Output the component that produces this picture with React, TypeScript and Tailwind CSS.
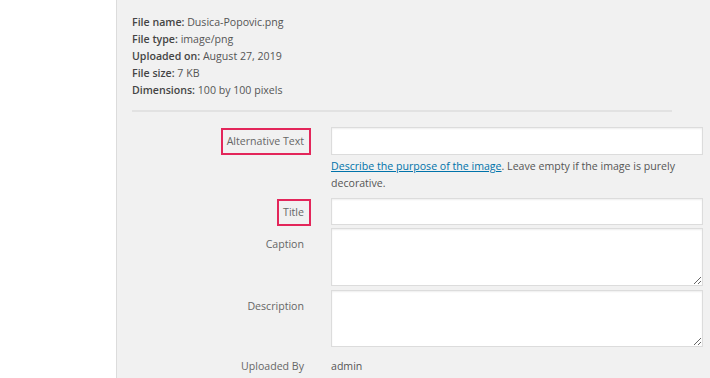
import React from "react";

const font = { fontFamily: '"Open Sans", "Noto Sans", Arial, sans-serif' };

function Annot({ children, box }: { children: React.ReactNode; box: string }) {
  return (
    <span className="relative inline-block">
      {children}
      <span className={`pointer-events-none absolute border-2 border-[#e3265a] ${box}`} />
    </span>
  );
}

function Row({
  label,
  children,
  className = "",
  labelClass = "",
}: {
  label: React.ReactNode;
  children: React.ReactNode;
  className?: string;
  labelClass?: string;
}) {
  return (
    <div className={`flex ${className}`}>
      <div className={`w-[172px] shrink-0 text-right text-[#666] ${labelClass}`}>{label}</div>
      <div className="ml-[27px] w-[372px] shrink-0">{children}</div>
    </div>
  );
}

export default function App() {
  return (
    <div className="flex h-[378px] w-[710px] overflow-hidden text-[10.6px] leading-[17px]" style={font}>
      <div className="w-[116px] shrink-0 bg-white" />
      <div className="w-px shrink-0 bg-[#dcdcdc]" />
      <div className="flex-1 bg-[#f1f1f1] pl-[15px]">
        <div className="pt-[14px] text-[#555]">
          <div><b className="font-semibold text-[#444]">File name:</b> Dusica-Popovic.png</div>
          <div><b className="font-semibold text-[#444]">File type:</b> image/png</div>
          <div><b className="font-semibold text-[#444]">Uploaded on:</b> August 27, 2019</div>
          <div><b className="font-semibold text-[#444]">File size:</b> 7 KB</div>
          <div><b className="font-semibold text-[#444]">Dimensions:</b> 100 by 100 pixels</div>
        </div>
        <div className="mt-[11px] h-[2px] w-[540px] bg-[#e2e2e2]" />
        <div className="mt-[15px]">
          <Row label={<Annot box="-left-[6px] -right-[7px] -top-[5px] -bottom-[5px]">Alternative Text</Annot>} labelClass="pt-[6px]">
            <div className="h-[28px] w-[372px] border border-[#dcdcdc] bg-white shadow-[inset_0_1px_2px_rgba(0,0,0,0.07)]" />
            <p className="mt-[3px] text-[#555]">
              <a className="text-[#0073aa] underline">Describe the purpose of the image</a>. Leave empty if the image is purely decorative.
            </p>
          </Row>
          <Row className="mt-[6px]" label={<Annot box="-left-[6px] -right-[7px] -top-[5px] -bottom-[5px]">Title</Annot>} labelClass="pt-[6px]">
            <div className="h-[27px] w-[372px] border border-[#dcdcdc] bg-white shadow-[inset_0_1px_2px_rgba(0,0,0,0.07)]" />
          </Row>
          <Row className="mt-[3px]" label="Caption" labelClass="pt-[8px]">
            <textarea className="block h-[58px] w-[372px] resize border border-[#dcdcdc] bg-white shadow-[inset_0_1px_2px_rgba(0,0,0,0.07)] outline-none" />
          </Row>
          <Row className="mt-[4px]" label="Description" labelClass="pt-[8px]">
            <textarea className="block h-[57px] w-[372px] resize border border-[#dcdcdc] bg-white shadow-[inset_0_1px_2px_rgba(0,0,0,0.07)] outline-none" />
          </Row>
          <Row className="mt-[11px]" label="Uploaded By">
            <div className="text-[#555]">admin</div>
          </Row>
        </div>
      </div>
    </div>
  );
}
